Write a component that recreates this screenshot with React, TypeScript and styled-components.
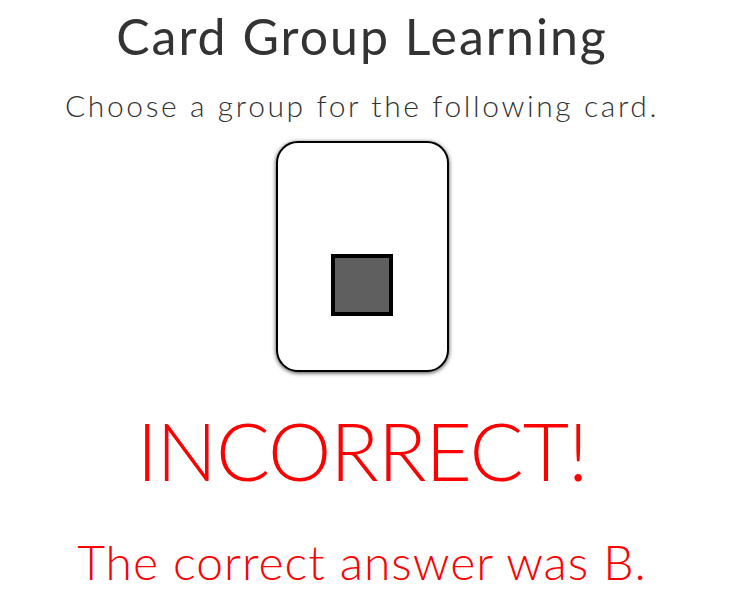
import React from "react";
import styled, { createGlobalStyle } from "styled-components";

const Global = createGlobalStyle`
  html, body { margin: 0; padding: 0; background: #ffffff; }
  body { font-family: Lato, "Open Sans", sans-serif; }
`;

const Page = styled.main`
  display: flex;
  flex-direction: column;
  align-items: center;
  width: 724px;
  text-align: center;
`;

const Title = styled.h1`
  margin: 6px 0 0;
  font-size: 50px;
  line-height: 60px;
  font-weight: 400;
  letter-spacing: 2px;
  color: #333333;
`;

const Subtitle = styled.p`
  margin: 21px 0 0;
  font-size: 30px;
  line-height: 36px;
  font-weight: 300;
  letter-spacing: 2.6px;
  color: #333333;
`;

const Card = styled.div`
  box-sizing: border-box;
  margin-top: 18px;
  width: 173px;
  height: 231px;
  border: 2px solid #000;
  border-radius: 22px;
  background: #fff;
  box-shadow: 0 1px 4px rgba(0, 0, 0, 0.75);
  display: flex;
  justify-content: center;
  padding-top: 111px;
`;

const Shape = styled.div`
  box-sizing: border-box;
  width: 62px;
  height: 62px;
  border: 4px solid #000;
  background: #5f5f5f;
`;

const Verdict = styled.h2<{ $size: number; $top: number; $spacing: number }>`
  margin: ${(p) => p.$top}px 0 0;
  font-size: ${(p) => p.$size}px;
  line-height: 1.2;
  font-weight: 300;
  letter-spacing: ${(p) => p.$spacing}px;
  color: #ff0000;
`;

export default function App() {
  return (
    <>
      <Global />
      <Page>
        <Title>Card Group Learning</Title>
        <Subtitle>Choose a group for the following card.</Subtitle>
        <Card>
          <Shape />
        </Card>
        <Verdict $size={80} $top={30} $spacing={-1}>INCORRECT!</Verdict>
        <Verdict $size={48} $top={35} $spacing={1}>The correct answer was B.</Verdict>
      </Page>
    </>
  );
}
